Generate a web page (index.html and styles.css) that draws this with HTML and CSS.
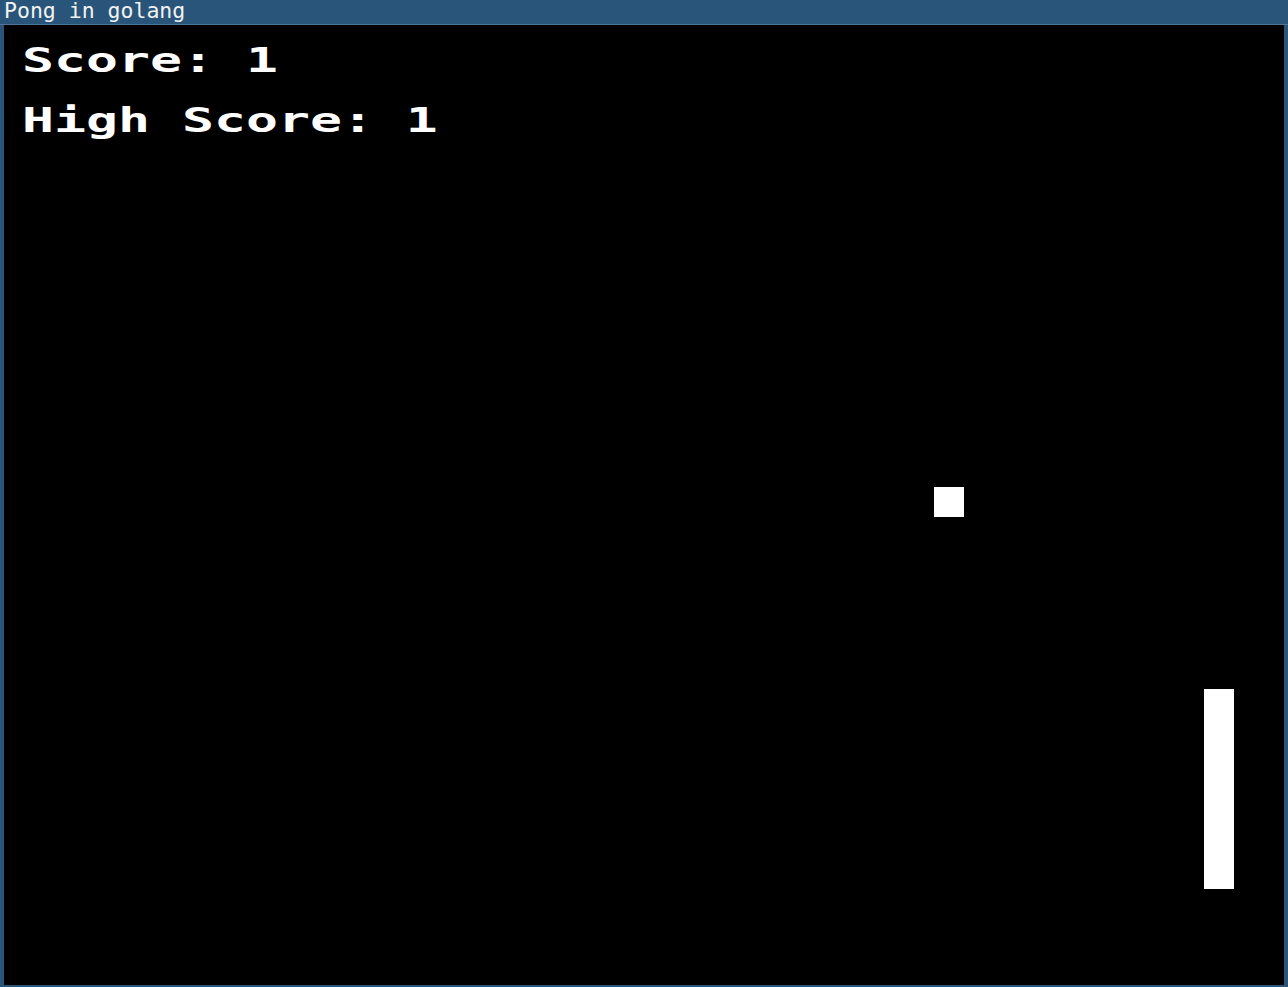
FILE: index.html
```html
<!DOCTYPE html>
<html>
<head>
<meta charset="utf-8">
<title>Pong in golang</title>
<link rel="stylesheet" href="styles.css">
</head>
<body>
<div class="window">
  <div class="titlebar">Pong in golang</div>
  <div class="frame">
    <div class="game">
      <div class="hud">
        <div class="line"><span class="px">Score: 1</span></div>
        <div class="line"><span class="px">High Score: 1</span></div>
      </div>
      <div class="ball"></div>
      <div class="paddle"></div>
    </div>
  </div>
</div>
</body>
</html>
```

FILE: styles.css
```css
html, body {
  margin: 0;
  padding: 0;
  width: 1288px;
  height: 987px;
  overflow: hidden;
  background: #29557a;
}

.window {
  display: flex;
  flex-direction: column;
  width: 1288px;
  height: 987px;
}

.titlebar {
  height: 25px;
  flex: 0 0 25px;
  box-sizing: border-box;
  border-bottom: 1px solid #4d7597;
  background: #29557a;
  color: #f2f2f2;
  font-family: "DejaVu Sans Mono", monospace;
  font-size: 21.5px;
  line-height: 22px;
  padding-left: 4px;
  white-space: pre;
}

.frame {
  flex: 1;
  display: flex;
  padding: 0 4px 2px 4px;
  background: #29557a;
}

.game {
  flex: 1;
  position: relative;
  background: #000;
  overflow: hidden;
}

.hud {
  display: flex;
  flex-direction: column;
  padding: 6px 0 0 18px;
}

.line {
  height: 60px;
  line-height: 60px;
}

.px {
  display: inline-block;
  color: #fff;
  font-family: "DejaVu Sans Mono", monospace;
  font-weight: bold;
  font-size: 33px;
  white-space: pre;
  transform: scaleX(1.61);
  transform-origin: left center;
}

.ball {
  position: absolute;
  left: 930px;
  top: 462px;
  width: 30px;
  height: 30px;
  background: #fff;
}

.paddle {
  position: absolute;
  left: 1200px;
  top: 664px;
  width: 30px;
  height: 200px;
  background: #fff;
}
```
